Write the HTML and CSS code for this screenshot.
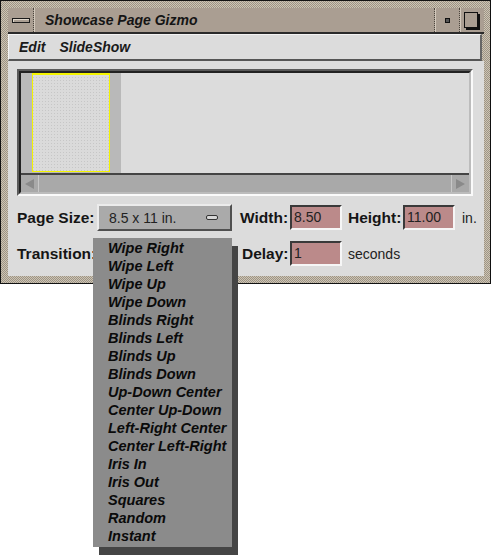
FILE: index.html
```html
<!DOCTYPE html>
<html lang="en">
<head>
    <meta charset="UTF-8">
    <title>Showcase Page Gizmo</title>
    <link rel="stylesheet" href="styles.css">
</head>
<body>

    <div class="window">
        <div class="titlebar">
            <div class="tb-btn tb-close"><span class="close-bar"></span></div>
            <div class="tb-title">Showcase Page Gizmo</div>
            <div class="tb-btn tb-min"><span class="min-dot"></span></div>
            <div class="tb-btn tb-max"><span class="max-box"></span></div>
        </div>

        <div class="menubar">
            <span class="menu-item">Edit</span>
            <span class="menu-item">SlideShow</span>
        </div>

        <div class="content">
            <div class="preview">
                <div class="preview-inner">
                    <div class="canvas">
                        <div class="page-strip">
                            <div class="page"></div>
                        </div>
                    </div>
                    <div class="hscroll">
                        <div class="arrow-btn left"><span class="tri-left"></span></div>
                        <div class="track"></div>
                        <div class="arrow-btn right"><span class="tri-right"></span></div>
                    </div>
                </div>
            </div>

            <div class="row">
                <div class="label col1">Page Size:</div>
                <div class="option-btn">
                    <span>8.5 x 11 in.</span>
                    <span class="option-mark"></span>
                </div>
                <div class="label col3">Width:</div>
                <div class="field">8.50</div>
                <div class="label col5">Height:</div>
                <div class="field">11.00</div>
                <div class="unit">in.</div>
            </div>

            <div class="row">
                <div class="label col1">Transition:</div>
                <!-- hidden under the open popup -->
                <div class="option-btn">
                    <span></span>
                    <span class="option-mark"></span>
                </div>
                <div class="label col3 delay">Delay:</div>
                <div class="field">1</div>
                <div class="unit wide">seconds</div>
            </div>
        </div>
    </div>

    <!-- popup menu of the Transition option button -->
    <ul class="popup">
        <li>Wipe Right</li>
        <li>Wipe Left</li>
        <li>Wipe Up</li>
        <li>Wipe Down</li>
        <li>Blinds Right</li>
        <li>Blinds Left</li>
        <li>Blinds Up</li>
        <li>Blinds Down</li>
        <li>Up-Down Center</li>
        <li>Center Up-Down</li>
        <li>Left-Right Center</li>
        <li>Center Left-Right</li>
        <li>Iris In</li>
        <li>Iris Out</li>
        <li>Squares</li>
        <li>Random</li>
        <li>Instant</li>
    </ul>

</body>
</html>
```

FILE: styles.css
```css
body {
    margin: 0;
    background: #fff;
    font-family: "Liberation Sans", Arial, sans-serif;
    color: #111;
}
.window {
    width: 491px;
    height: 284px;
    box-sizing: border-box;
    border: 1px solid #111;
    padding: 7px 6px 7px 7px;
    background: repeating-conic-gradient(#cdc4b4 0 25%, #9d9485 0 50%) 0 0 / 2px 2px;
}

/* title bar */
.titlebar {
    display: flex;
    height: 24px;
    background: #aa9e92;
    border-bottom: 2px solid #2a2a2a;
}
.tb-btn {
    display: flex;
    align-items: center;
    justify-content: center;
    width: 24px;
    border-right: 1px dotted #4a443c;
    box-shadow: 1px 0 0 #d4cabd;
}
.tb-close {
    width: 25px;
}
.close-bar {
    width: 16px;
    height: 3px;
    background: #aa9e92;
    border: 1px solid #1a1a1a;
    box-shadow: inset 1px 1px 0 #e0d8cc;
}
.tb-title {
    flex: 1;
    padding-left: 11px;
    font-size: 14px;
    font-weight: bold;
    font-style: italic;
    line-height: 24px;
    color: #151515;
}
.tb-min {
    border-left: 1px dotted #4a443c;
    box-shadow: inset 1px 0 0 #d4cabd, 1px 0 0 #d4cabd;
}
.min-dot {
    width: 3px;
    height: 3px;
    border: 1px solid #111;
    background: #555;
    margin-top: 1px;
}
.tb-max {
    border-right: none;
    box-shadow: none;
}
.max-box {
    width: 12px;
    height: 14px;
    border: 1px solid #111;
    box-shadow: 2px 2px 0 #111;
    margin-right: 2px;
}

/* menu bar */
.menubar {
    display: flex;
    gap: 14px;
    height: 24px;
    padding-left: 10px;
    background: #dcdcdc;
    border-top: 1px solid #f4f4f4;
    border-left: 1px solid #f4f4f4;
    border-bottom: 2px solid #555;
    border-right: 2px solid #666;
    margin-right: 2px;
}
.menu-item {
    font-size: 14px;
    font-weight: bold;
    font-style: italic;
    line-height: 24px;
    color: #1a1a1a;
}

/* main area */
.content {
    height: 215px;
    box-sizing: border-box;
    padding: 8px 0 0 9px;
    background: #dcdcdc;
}
.preview {
    width: 456px;
    height: 127px;
    box-sizing: border-box;
    border: 2px solid;
    border-color: #5a5a5a #fafafa #fafafa #5a5a5a;
}
.preview-inner {
    height: 100%;
    box-sizing: border-box;
    border: 2px solid;
    border-color: #222 #bcbcbc #bcbcbc #222;
    display: flex;
    flex-direction: column;
}
.canvas {
    flex: none;
    height: 100px;
    display: flex;
    background: #dcdcdc;
    border-bottom: 2px solid #444;
    box-shadow: 0 1px 0 #f0f0f0;
}
.page-strip {
    flex: none;
    width: 100px;
    padding-left: 11px;
    box-sizing: border-box;
    background-color: #b9b9b9;
}
.page {
    width: 78px;
    height: 99px;
    background-color: #dadada;
    background-image: radial-gradient(circle, #c6c6c6 0.7px, transparent 0.9px);
    background-size: 3px 3px;
    box-shadow: inset 0 0 0 1px #f4f400, inset 0 2px 0 #f4f400;
}
.hscroll {
    flex: 1;
    display: flex;
    background: #a9a9a9;
}
.arrow-btn {
    width: 17px;
    display: flex;
    align-items: center;
    justify-content: center;
}
.arrow-btn.left {
    border-right: 1px solid #c8c8c8;
}
.arrow-btn.right {
    border-left: 1px solid #c8c8c8;
}
.track {
    flex: 1;
}
.tri-left {
    width: 0;
    height: 0;
    border-top: 5px solid transparent;
    border-bottom: 5px solid transparent;
    border-right: 9px solid #8a8a8a;
}
.tri-right {
    width: 0;
    height: 0;
    border-top: 5px solid transparent;
    border-bottom: 5px solid transparent;
    border-left: 9px solid #8a8a8a;
}

/* form rows */
.row {
    display: flex;
    align-items: center;
    height: 27px;
    margin-top: 8px;
}
.row + .row {
    margin-top: 9px;
}
.label {
    font-size: 15.5px;
    font-weight: bold;
    color: #151515;
}
.col1 {
    width: 80px;
}
.col3 {
    width: 50px;
    margin-left: 8px;
}
.col3.delay {
    box-sizing: border-box;
    padding-left: 2px;
}
.col5 {
    width: 55px;
    margin-left: 6px;
}
.option-btn {
    width: 135px;
    height: 27px;
    box-sizing: border-box;
    display: flex;
    align-items: center;
    justify-content: space-between;
    padding: 0 12px 0 10px;
    background: #aaaaaa;
    border: 2px solid;
    border-color: #ececec #505050 #505050 #ececec;
    font-size: 14px;
    color: #222;
}
.option-mark {
    width: 10px;
    height: 3px;
    background: #d6d6d6;
    border: 1px solid #333;
    border-radius: 2px;
}
.field {
    width: 52px;
    height: 25px;
    box-sizing: border-box;
    padding-left: 2px;
    background: #bb8a8a;
    border: 2px solid;
    border-color: #3a3a3a #f6f6f6 #f6f6f6 #3a3a3a;
    font-size: 14px;
    line-height: 21px;
    color: #222;
}
.unit {
    margin-left: 7px;
    font-size: 14px;
    color: #222;
}
.unit.wide {
    margin-left: 6px;
}

/* popup menu */
.popup {
    position: absolute;
    left: 93px;
    top: 238px;
    width: 139px;
    height: 309px;
    box-sizing: border-box;
    margin: 0;
    padding: 1px 0 0 15px;
    list-style: none;
    background: #8b8b8b;
    box-shadow: 6px 8px 0 #454545;
}
.popup li {
    font-size: 14.5px;
    font-weight: bold;
    font-style: italic;
    line-height: 18px;
    color: #0a0a0a;
}
```
